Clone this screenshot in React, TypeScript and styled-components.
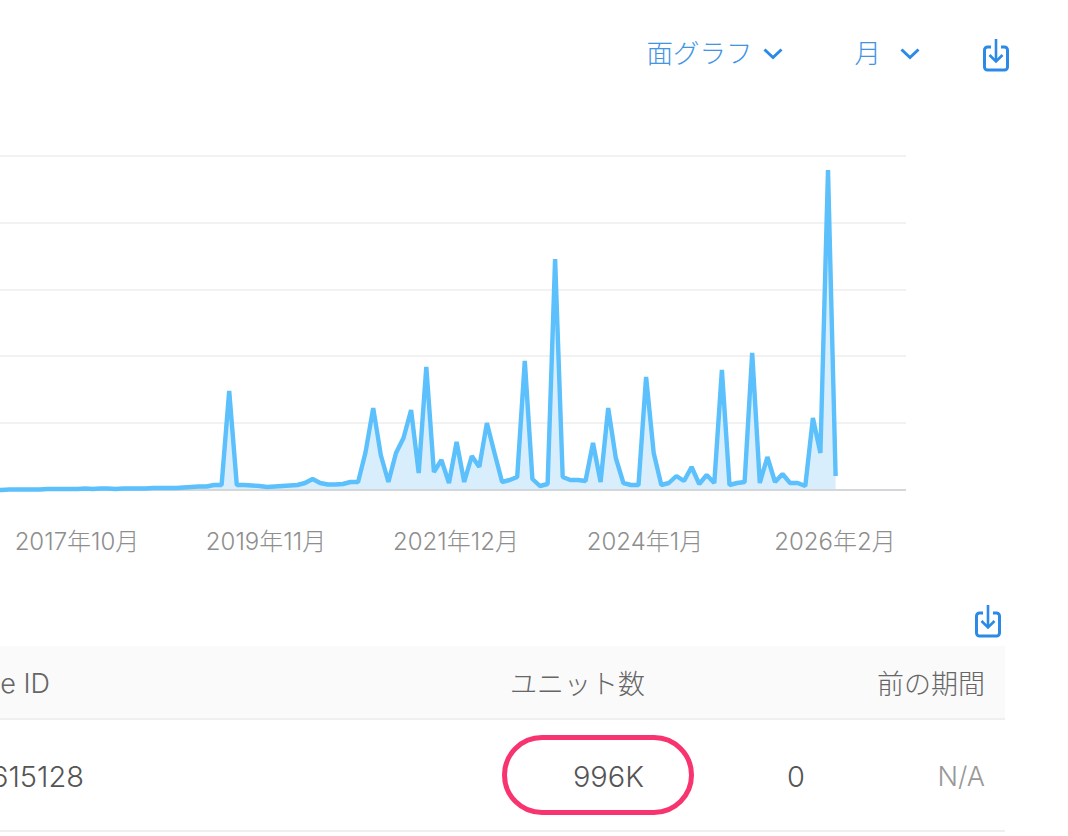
import styled, { createGlobalStyle } from 'styled-components'

const GlobalStyle = createGlobalStyle`
  html, body {
    margin: 0;
    padding: 0;
    background: #fff;
  }
  body {
    font-family: Inter, "Noto Sans CJK JP", sans-serif;
    font-weight: 300;
    overflow: hidden;
  }
`

const Page = styled.div`
  width: 1068px;
  height: 836px;
  overflow: hidden;
`

const Toolbar = styled.div`
  height: 110px;
  box-sizing: border-box;
  padding: 31px 59px 0 0;
  display: flex;
  justify-content: flex-end;
  align-items: flex-start;
`

const Select = styled.div<{ $gap: number; $mr: number }>`
  display: flex;
  align-items: center;
  gap: ${(p) => p.$gap}px;
  margin-right: ${(p) => p.$mr}px;
  height: 40px;
  color: #3f94e4;
  font-size: 26.5px;

  svg {
    margin-top: 6px;
  }
`

const ToolbarIcon = styled.div`
  margin-top: 7px;
`

const Chart = styled.svg`
  display: block;
`

const AxisLabel = styled.text`
  fill: #8e8e8e;
  font-size: 24px;
  text-anchor: middle;
`

const TableTools = styled.div`
  height: 76px;
  width: 1005px;
  padding: 34px 4px 0 0;
  box-sizing: border-box;
  display: flex;
  justify-content: flex-end;
`

const Row = styled.div<{ $head?: boolean }>`
  width: 1005px;
  height: ${(p) => (p.$head ? 74 : 112)}px;
  box-sizing: border-box;
  display: grid;
  grid-template-columns: 84px 561px 160px 180px 20px;
  align-items: center;
  background: ${(p) => (p.$head ? '#fafafa' : '#fff')};
  border-bottom: 2px solid #efefef;
  color: ${(p) => (p.$head ? '#666' : '#555')};
  font-size: ${(p) => (p.$head ? 27 : 29)}px;
`

const IdCell = styled.div<{ $pad: number }>`
  display: flex;
  justify-content: flex-end;
  overflow: hidden;
  white-space: nowrap;
  padding-right: ${(p) => p.$pad}px;
`

const Cell = styled.div`
  display: flex;
  justify-content: flex-end;
  white-space: nowrap;
`

const MutedCell = styled(Cell)`
  color: #999;
  font-size: 27px;
`

const Value = styled.span<{ $drop?: number }>`
  display: block;
  padding-top: ${(p) => p.$drop ?? 3}px;
`

const Oval = styled.div`
  width: 192px;
  height: 80px;
  box-sizing: border-box;
  border: 5px solid #f7346f;
  border-radius: 40px;
  padding-right: 45px;
  margin-right: -49px;
  display: flex;
  align-items: center;
  justify-content: flex-end;
`

const Chevron = () => (
  <svg width="20" height="12" viewBox="0 0 20 12" fill="none" stroke="#2a8ae6" strokeWidth="3">
    <path d="M1.5 1.5 10 9.5 18.5 1.5" />
  </svg>
)

const DownloadIcon = () => (
  <svg width="26" height="34" viewBox="0 0 26 34" fill="none" stroke="#2a8ae6" strokeWidth="3">
    <path d="M8 9H4.5A3 3 0 0 0 1.5 12V29A3 3 0 0 0 4.5 32H21.5A3 3 0 0 0 24.5 29V12A3 3 0 0 0 21.5 9H18" />
    <path d="M13 1V23" strokeWidth="2.6" />
    <path d="M6.5 17 13 23.5 19.5 17" strokeWidth="2.6" />
  </svg>
)

// newest month first, y in page px
const recent = [
  476, 170, 453, 418, 486, 483, 483, 474, 482, 457, 483, 353, 482, 483, 485, 370, 483, 475, 484, 467,
  481, 476, 483, 485, 453, 377, 485, 485, 483, 458, 408, 482, 443, 481, 480, 480, 477, 259, 484, 486,
  479, 361, 477, 480, 482, 453, 423, 467, 456, 482, 442, 483, 460, 472, 367, 473, 410, 438, 453, 482,
  455, 408, 452, 482, 482, 484, 484.5, 484.5, 483, 479, 483, 485, 485.5, 486, 486.5, 487, 486, 485.5,
  485, 485, 391, 485, 485, 486.5, 486.5, 487, 487.5, 488, 488, 488, 488, 488.5, 488.5, 488.5, 488.5,
  489, 488.5, 488.5, 489, 488.5, 489, 489, 489, 489, 489, 489.5, 489.5, 489.5, 489.5, 489.5, 490, 490,
]

const points = recent.map((y, k) => `${(835.6 - k * 7.58).toFixed(1)},${y}`)
const line = points.join(' ')
const lastX = (835.6 - (recent.length - 1) * 7.58).toFixed(1)
const area = `835.6,490 ${line} ${lastX},490`

const grid = [156, 223, 290, 356, 423]

const labels = [
  { x: 77, text: '2017年10月' },
  { x: 266, text: '2019年11月' },
  { x: 456, text: '2021年12月' },
  { x: 645, text: '2024年1月' },
  { x: 835, text: '2026年2月' },
]

const App = () => {
  return (
    <Page>
      <GlobalStyle />
      <Toolbar>
        <Select $gap={10} $mr={72}>
          面グラフ
          <Chevron />
        </Select>
        <Select $gap={19} $mr={63}>
          月
          <Chevron />
        </Select>
        <ToolbarIcon>
          <DownloadIcon />
        </ToolbarIcon>
      </Toolbar>
      <Chart width="906" height="460" viewBox="0 110 906 460">
        {grid.map((y) => (
          <line key={y} x1="0" x2="906" y1={y} y2={y} stroke="#f2f2f2" strokeWidth="2" />
        ))}
        <polygon points={area} fill="#d9eefd" />
        <line x1="0" x2="906" y1="490" y2="490" stroke="#d4d6d9" strokeWidth="2" />
        <polyline points={line} fill="none" stroke="#5bc0fb" strokeWidth="4.4" strokeLinejoin="bevel" />
        {labels.map((l) => (
          <AxisLabel key={l.x} x={l.x} y="550">
            {l.text}
          </AxisLabel>
        ))}
      </Chart>
      <TableTools>
        <DownloadIcon />
      </TableTools>
      <Row $head>
        <IdCell $pad={34}>
          <Value>Bundle ID</Value>
        </IdCell>
        <Cell>
          <Value $drop={1}>ユニット数</Value>
        </Cell>
        <Cell />
        <Cell>
          <Value $drop={1}>前の期間</Value>
        </Cell>
      </Row>
      <Row>
        <IdCell $pad={0}>
          <Value>615128</Value>
        </IdCell>
        <Cell>
          <Oval>
            <Value>996K</Value>
          </Oval>
        </Cell>
        <Cell>
          <Value>0</Value>
        </Cell>
        <MutedCell>
          <Value>N/A</Value>
        </MutedCell>
      </Row>
    </Page>
  )
}

export default App
